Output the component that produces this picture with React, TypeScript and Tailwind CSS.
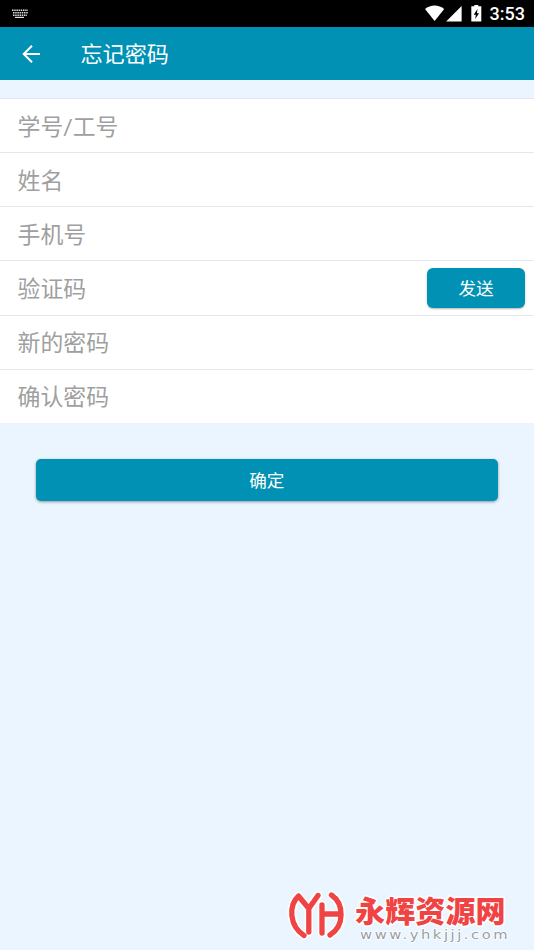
const fields = ["学号/工号", "姓名", "手机号", "验证码", "新的密码", "确认密码"];

const StatusBar = () => (
  <div className="flex h-[27px] items-center bg-black pl-3 pr-[9px] text-white">
    <svg width="16" height="10" viewBox="0 0 16 10" className="mt-px">
      <path d="M0 1.2H16M1 3.8H16M1 6.2H15" stroke="#ddd" strokeWidth="1.4" strokeDasharray="1.5 0.7" />
      <path d="M3 8.4H12" stroke="#ddd" strokeWidth="1.2" />
    </svg>
    <svg width="60" height="18" viewBox="0 0 60 18" className="ml-auto" fill="#fff">
      <path d="M0 4C5.4 -0.7 13.8 -0.7 19.2 4L9.6 16Z" />
      <path d="M36.6 1V16.5H21.1Z" />
      <path d="M46.3 1.3H49.3V0H53.3V1.3H56.3V16.5H46.3Z" />
      <path d="M52.5 4L48.7 9.8H50.9L50.1 14L54.1 8.2H51.9Z" fill="#000" />
    </svg>
    <span className="ml-[5px] font-['Roboto',sans-serif] text-[18px] font-medium leading-none">3:53</span>
  </div>
);

const Watermark = () => (
  <div className="absolute left-[284px] top-[886px] h-[60px] w-[230px]">
    <svg width="230" height="60" viewBox="0 0 230 60">
      <g fill="none" strokeLinejoin="round" strokeLinecap="round">
        <g stroke="#fff" strokeWidth="8.5">
          <path d="M14.5 10C4.5 19 5 40 20 49.5M14.5 10L24.8 22.5L34 9.5M24.8 22V46" />
          <path d="M38 19V47M38 28H57M47.5 9C60.5 18 60.5 40 46 49" />
        </g>
        <g stroke="#f04444" strokeWidth="5.3">
          <path d="M14.5 10C4.5 19 5 40 20 49.5M14.5 10L24.8 22.5L34 9.5M24.8 22V46" />
          <path d="M38 19V47M38 28H57M47.5 9C60.5 18 60.5 40 46 49" />
        </g>
      </g>
      <text
        x="64.5"
        y="53"
        transform="scale(1.18 1)"
        textLength="125"
        className="font-['DejaVu_Sans',sans-serif] text-[12.5px]"
        fill="#9a9ea2"
        stroke="#fff"
        strokeWidth="1.5"
        paintOrder="stroke"
      >
        www.yhkjjj.com
      </text>
      <text
        x="71"
        y="36"
        textLength="150.5"
        className="font-['Noto_Sans_CJK_SC',sans-serif] text-[30px] font-black"
        fill="#f04444"
        stroke="#fff"
        strokeWidth="3"
        strokeLinejoin="round"
        paintOrder="stroke"
      >
        永辉资源网
      </text>
    </svg>
  </div>
);

const App = () => {
  return (
    <div className="relative min-h-[950px] w-full overflow-hidden bg-[#eaf5ff] font-['Noto_Sans_CJK_SC',sans-serif]">
      <StatusBar />

      {/* Header */}
      <header className="flex h-[53px] items-center bg-[#0091b4] pl-[22px] text-white">
        <svg width="18" height="18" viewBox="0 0 18 18" fill="none" stroke="#fff" strokeWidth="2">
          <path d="M18 9H1.5M10 0.7L1.7 9L10 17.3" />
        </svg>
        <h1 className="-mt-[3px] ml-[40.5px] text-[22.1px] leading-none">忘记密码</h1>
      </header>

      {/* Form fields */}
      <div className="mt-[18px] h-[325px]">
        {fields.map((field) => (
          <div
            key={field}
            className="flex h-[54.17px] items-center justify-between border-t border-[#e3e8ee] bg-white pl-[17.5px] pr-[9px]"
          >
            <span className="mt-[4.8px] font-['Roboto','Noto_Sans_CJK_SC',sans-serif] text-[22.9px] leading-none text-[#9f9f9f]">
              {field}
            </span>
            {field === "验证码" && (
              <button className="h-10 w-[98px] rounded-[6px] bg-[#0091b4] text-[17.6px] leading-none text-white shadow-[0_1px_2px_rgba(0,0,0,0.3)]">
                发送
              </button>
            )}
          </div>
        ))}
      </div>

      {/* Submit */}
      <div className="pl-[35.5px] pr-[36px] pt-9">
        <button className="h-[42px] w-full rounded-[5px] bg-[#0091b4] text-[17.6px] leading-none text-white shadow-[0_1px_3px_rgba(0,0,0,0.4)]">
          确定
        </button>
      </div>

      <Watermark />
    </div>
  );
};

export default App;
